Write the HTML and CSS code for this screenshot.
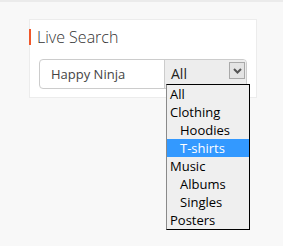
FILE: index.html
```html
<!DOCTYPE html>
<html>
<head>
<meta charset="utf-8">
<link rel="stylesheet" href="styles.css">
</head>
<body>
<div class="page">
  <div class="card">
    <h2 class="title">Live Search</h2>
    <div class="group">
      <div class="input">Happy Ninja</div>
      <div class="select">
        <span class="select-value">All</span>
        <span class="arrow">
          <svg width="9" height="6" viewBox="0 0 9 6"><path d="M1 1 L4.5 4.5 L8 1" fill="none" stroke="#555" stroke-width="2"/></svg>
        </span>
        <ul class="dropdown">
          <li>All</li>
          <li>Clothing</li>
          <li class="sub">Hoodies</li>
          <li class="sub selected">T-shirts</li>
          <li>Music</li>
          <li class="sub">Albums</li>
          <li class="sub">Singles</li>
          <li>Posters</li>
        </ul>
      </div>
    </div>
  </div>
</div>
</body>
</html>
```
FILE: styles.css
```css
html, body {
  margin: 0;
  padding: 0;
}
body {
  background: #f8f8f8;
  font-family: "Open Sans", "Noto Sans", sans-serif;
  width: 283px;
  height: 246px;
  overflow: hidden;
}
.page {
  border-top: 2px solid #ebebeb;
  padding: 17px 0 0 29px;
}
.card {
  width: 226px;
  background: #fff;
  border: 1px solid #ececec;
  padding: 9px 0 8px 0;
}
.title {
  margin: 0 0 14px -1px;
  border-left: 2px solid #f0572a;
  padding-left: 6px;
  height: 16px;
  line-height: 16px;
  font-size: 16px;
  font-weight: 300;
  color: #333;
}
.group {
  margin-left: 9px;
  width: 206px;
  height: 28px;
  border: 1px solid #ccc;
  border-radius: 4px;
  display: flex;
}
.input {
  width: 113px;
  padding-left: 11px;
  line-height: 28px;
  font-size: 13px;
  color: #444;
}
.select {
  position: relative;
  flex: 1;
  border-left: 1px solid #ccc;
  background: #ededed;
  border-radius: 0 3px 3px 0;
  display: flex;
  align-items: flex-start;
}
.select-value {
  padding-left: 6px;
  line-height: 28px;
  font-size: 14px;
  color: #222;
}
.arrow {
  margin: 2px 1px 0 auto;
  width: 14px;
  height: 15px;
  border: 1px solid #a9a9a9;
  background: #e4e4e4;
  display: flex;
  align-items: center;
  justify-content: center;
}
.dropdown {
  position: absolute;
  left: 1px;
  top: 24px;
  width: 82px;
  margin: 0;
  padding: 0;
  list-style: none;
  background: #efefef;
  border: 1px solid #000;
  border-left-color: #8a8a8a;
  font-size: 13px;
  color: #000;
}
.dropdown li {
  height: 18px;
  line-height: 18px;
  padding-left: 3px;
}
.dropdown li.sub {
  padding-left: 13px;
}
.dropdown li.selected {
  background: #3399ff;
  color: #fff;
}
```
